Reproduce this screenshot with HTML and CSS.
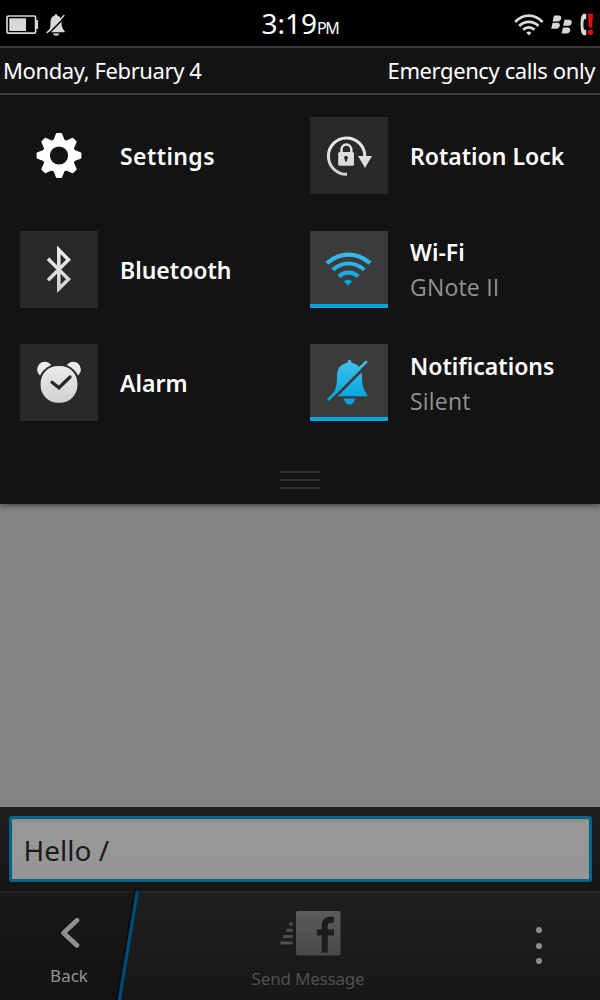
FILE: index.html
```html
<!DOCTYPE html>
<html lang="en">
<head>
  <meta charset="UTF-8">
  <title>Quick Settings</title>
  <link rel="stylesheet" href="styles.css">
</head>
<body>
  <svg class="defs" width="0" height="0">
    <defs>
      <linearGradient id="light" x1="0" y1="0" x2="0" y2="78" gradientUnits="userSpaceOnUse">
        <stop offset="0.2" stop-color="#efefef"/>
        <stop offset="0.85" stop-color="#cccccc"/>
      </linearGradient>
      <linearGradient id="blue" x1="0" y1="16" x2="0" y2="56" gradientUnits="userSpaceOnUse">
        <stop offset="0" stop-color="#44bfee"/>
        <stop offset="1" stop-color="#00a5e0"/>
      </linearGradient>
      <linearGradient id="grey" x1="0" y1="0" x2="0" y2="1">
        <stop offset="0" stop-color="#5c5c5c"/>
        <stop offset="1" stop-color="#484848"/>
      </linearGradient>
    </defs>
  </svg>

  <div class="screen">
    <div class="status-bar">
      <div class="status-left">
        <svg width="34" height="20" viewBox="0 0 34 20">
          <rect x="1" y="1" width="28.6" height="17.2" rx="1.5" fill="#000" stroke="#d8d8d8" stroke-width="1.7"/>
          <rect x="29.500" y="5" width="2.6" height="9" rx="1" fill="#d8d8d8"/>
          <rect x="3.3" y="3.3" width="16.7" height="12.7" fill="#d8d8d8"/>
        </svg>
        <svg class="status-bell" width="20" height="22" viewBox="0 0 20 22">
          <path d="M10 0.3c1 0 1.500 .6 1.500 1.500 3 .7 4 3 4 6 0 5 1 6.500 3.200 9.500v1H2c2-3 2.500-4.500 2.500-9.500 0-4 1.200-6.300 4-7C8.500.9 9 .3 10 .3z" fill="#d8d8d8"/>
          <path d="M7 19.500h6.400c-.5 3-5.900 3-6.400 0z" fill="#d8d8d8"/>
          <path d="M2 20.200L19.800 2.300" stroke="#000" stroke-width="1.500"/>
          <path d="M0.700 19L18.300 1.200" stroke="#d8d8d8" stroke-width="1.500"/>
        </svg>
      </div>
      <div class="clock">3:19<span>PM</span></div>
      <div class="status-right">
        <svg width="30" height="22" viewBox="0 0 30 22" fill="none" stroke="#dcdcdc" stroke-width="2.700">
          <path d="M1.200 8C9-.5 20.500-.5 28.500 8"/>
          <path d="M5.200 12c5.500-5.500 13.800-5.500 19.300 0"/>
          <path d="M9.200 15.800c3.200-3.200 8-3.200 11.300 0"/>
          <path d="M12.300 18.700c1.500-1.500 3.600-1.500 5.100 0l-2.500 2.800z" fill="#dcdcdc" stroke="none"/>
        </svg>
        <svg width="22" height="20" viewBox="0 0 22 20" fill="#d8d8d8">
          <path d="M3 .5h4.800c4 0 2.700 6-1 6H1.600z"/>
          <path d="M1.600 7.800h4.800c4 0 2.700 6-1 6H.2z"/>
          <path d="M13.500 4.800h4.800c4 0 2.700 6-1 6h-5.200z"/>
          <path d="M12 12.400h4.800c4 0 2.700 6-1 6h-5.200z"/>
        </svg>
        <svg width="14" height="23" viewBox="0 0 14 23">
          <path d="M6.200 .8H4.500C2 .8 .6 3 .6 11.500S2 22.200 4.500 22.200h1.700v-5.500H4c-.8-3.500-.8-7 0-10.400h2.200z" fill="#d8d8d8"/>
          <path d="M8 .8h5l-.8 13.700H8.800z" fill="#e00d0d"/>
          <circle cx="10.500" cy="19.300" r="2.700" fill="#e00d0d"/>
        </svg>
      </div>
    </div>

    <div class="panel">
      <div class="info-row">
        <span>Monday, February 4</span>
        <span>Emergency calls only</span>
      </div>

      <div class="toggles">
        <div class="toggle">
          <div class="tile plain">
            <svg width="78" height="77" viewBox="0 0 78 77">
              <g fill="#fff" transform="translate(39 38.500)">
                <g id="teeth">
                  <path id="tooth" d="M-6.500-13L-3.200-21.500q.3-.9 1.200-.9h4q.9 0 1.200.9L6.500-13z"/>
                  <use href="#tooth" transform="rotate(45)"/>
                  <use href="#tooth" transform="rotate(90)"/>
                  <use href="#tooth" transform="rotate(135)"/>
                </g>
                <use href="#teeth" transform="rotate(180)"/>
                <circle r="12.800" fill="none" stroke="#fff" stroke-width="7.400"/>
              </g>
            </svg>
          </div>
          <div class="label"><b class="wide">Settings</b></div>
        </div>

        <div class="toggle">
          <div class="tile">
            <svg width="78" height="77" viewBox="0 0 78 77">
              <path d="M37 57.300A18.200 18.200 0 1 1 54.800 39" fill="none" stroke="url(#light)" stroke-width="3"/>
              <path d="M48 39h14l-7 12z" fill="url(#light)"/>
              <path d="M31.500 36v-3.500a4.900 4.900 0 0 1 9.800 0V36" fill="none" stroke="url(#light)" stroke-width="2.500"/>
              <rect x="28.200" y="35" width="15.800" height="13.800" rx="1.500" fill="url(#light)"/>
              <path d="M36 38.800a2 2 0 0 1 1 3.700v1.900h-2v-1.900a2 2 0 0 1 1-3.700z" fill="#292929"/>
            </svg>
          </div>
          <div class="label"><b>Rotation Lock</b></div>
        </div>

        <div class="toggle">
          <div class="tile">
            <svg width="78" height="77" viewBox="0 0 78 77">
              <path d="M28 27.800L48.500 48.200 38.800 57.800V18.800L48.500 28.800 28 49.300" fill="none" stroke="url(#light)" stroke-width="3.500"/>
            </svg>
          </div>
          <div class="label"><b>Bluetooth</b></div>
        </div>

        <div class="toggle">
          <div class="tile on">
            <svg width="78" height="77" viewBox="0 0 78 77" fill="none" stroke="url(#blue)" stroke-width="4.200">
              <path d="M16.800 32.300C30 20.600 47 20.600 60.200 32.300"/>
              <path d="M22.800 38.800c9.500-8.400 22-8.400 31.500 0"/>
              <path d="M28.800 45.300c6-5 13.500-5 19.500 0"/>
              <path d="M34 50.400c2.500-2.300 5.500-2.300 8 0l-4 4z" fill="url(#blue)" stroke="none"/>
            </svg>
          </div>
          <div class="label"><b>Wi-Fi</b><small>GNote II</small></div>
        </div>

        <div class="toggle">
          <div class="tile">
            <svg width="78" height="77" viewBox="0 0 78 77">
              <circle cx="24.800" cy="25.500" r="7.700" fill="url(#light)"/>
              <circle cx="53.200" cy="25.500" r="7.700" fill="url(#light)"/>
              <ellipse cx="39" cy="40.200" rx="21" ry="20.500" fill="#292929"/>
              <rect x="20.600" y="22" width="36.800" height="36.800" rx="17.400" fill="url(#light)"/>
              <path d="M32 38.200l7 5.500L50 33" fill="none" stroke="#292929" stroke-width="3.300" stroke-linecap="round"/>
            </svg>
          </div>
          <div class="label"><b>Alarm</b></div>
        </div>

        <div class="toggle">
          <div class="tile on">
            <svg width="78" height="77" viewBox="0 0 78 77">
              <path d="M39.500 16c1.500 0 2 1 2 2.800 7.500 1.200 10.500 6.500 10.500 13.500 0 10 1.500 12 5.500 19.500v.5H22v-1c4-7 5-9 5-19 0-7.500 3-12 10.500-13.500 0-1.800.5-2.800 2-2.800z" fill="url(#blue)"/>
              <path d="M34 54.500h11c-.8 8-10.200 8-11 0z" fill="url(#blue)"/>
              <path d="M22.500 55.500L58.500 19.500" stroke="#3b3b3b" stroke-width="2.800"/>
              <path d="M18.500 55.500L56 18" stroke="url(#blue)" stroke-width="2.600" stroke-linecap="round"/>
            </svg>
          </div>
          <div class="label"><b>Notifications</b><small>Silent</small></div>
        </div>
      </div>

      <div class="grip"><i></i><i></i><i></i></div>
    </div>

    <div class="content"></div>

    <div class="compose">
      <div class="field">Hello /</div>
    </div>

    <div class="action-bar">
      <div class="back">
        <svg width="24" height="34" viewBox="0 0 24 34">
          <path d="M19.500 4.500L6 17l13.500 12.500" fill="none" stroke="#0c0c0c" stroke-width="6.500" stroke-linecap="round" stroke-linejoin="round"/>
          <path d="M20 4.300L6.500 17l13.500 12.300" fill="none" stroke="#8e8e8e" stroke-width="5" stroke-linecap="round" stroke-linejoin="round"/>
        </svg>
        <span>Back</span>
      </div>
      <svg width="24" height="109" viewBox="0 0 24 109">
        <path d="M0 0H20L2 109H0z" fill="#000" fill-opacity="0.200"/>
        <path d="M20 0L2 109" stroke="#090909" stroke-width="2"/>
        <path d="M22.300 0L4.300 109" stroke="#004b7c" stroke-width="3.300"/>
      </svg>
      <div class="send">
        <svg width="62" height="46" viewBox="0 0 62 46">
          <rect x="17" y="1" width="44.500" height="44.500" rx="2" fill="url(#grey)"/>
          <path d="M54.800 9.800h-3.500q-5.500 0-5.500 5.500V42.500M38 22.500h17" fill="none" stroke="#1c1c1c" stroke-width="6"/>
          <g stroke="#505050" stroke-width="3" stroke-linecap="round">
            <path d="M11.500 14h1"/>
            <path d="M8.500 20.300h4"/>
            <path d="M5.500 26.600h7"/>
            <path d="M2.500 33h10"/>
          </g>
        </svg>
        <span>Send Message</span>
      </div>
      <div class="more"><i></i><i></i><i></i></div>
    </div>
  </div>
</body>
</html>
```

FILE: styles.css
```css
body {
  margin: 0;
  background: #000;
  font-family: "Noto Sans", sans-serif;
  color: #fff;
}
.defs {
  position: absolute;
}
svg {
  display: block;
}
.screen {
  display: flex;
  flex-direction: column;
  width: 600px;
  height: 1000px;
  overflow: hidden;
}
.status-bar {
  display: grid;
  grid-template-columns: 1fr auto 1fr;
  align-items: center;
  height: 46px;
  padding: 0 6px;
  background: #000;
}
.status-left,
.status-right {
  display: flex;
  align-items: center;
  padding-bottom: 2px;
}
.status-right {
  justify-content: flex-end;
  gap: 7px;
}
.status-bell {
  margin-left: 6px;
}
.clock {
  font-size: 28px;
  line-height: 46px;
}
.clock span {
  font-size: 16px;
  letter-spacing: -1.4px;
}
.panel {
  display: flex;
  flex-direction: column;
  height: 458px;
  background: #131313;
  box-shadow: 0 1px 6px rgba(0, 0, 0, 0.6);
  z-index: 1;
}
.info-row {
  display: flex;
  justify-content: space-between;
  height: 45px;
  padding: 0 5px 0 3px;
  border-top: 2px solid #3a3a3a;
  border-bottom: 2px solid #3d3d3d;
  font-size: 22px;
  line-height: 44px;
  letter-spacing: -0.4px;
}
.toggles {
  display: grid;
  grid-template-columns: 290px 290px;
  grid-auto-rows: 77px;
  row-gap: 36.5px;
  padding: 22px 0 0 20px;
}
.toggle {
  display: flex;
  gap: 22px;
}
.tile {
  width: 78px;
  height: 77px;
  background: #292929;
}
.tile.plain {
  background: none;
}
.tile.on {
  background: #3b3b3b;
  box-shadow: inset 0 -4px #00a5e0;
}
.label {
  display: flex;
  flex-direction: column;
  justify-content: center;
  padding-top: 2px;
  white-space: nowrap;
}
.label b {
  font-size: 23px;
  font-weight: 600;
  line-height: 35px;
}
.label .wide {
  letter-spacing: 0.4px;
}
.label small {
  font-family: "Open Sans", sans-serif;
  font-size: 23px;
  line-height: 35px;
  letter-spacing: 0.2px;
  color: #929292;
}
.grip {
  display: flex;
  flex-direction: column;
  align-items: center;
  gap: 6px;
  margin-top: 50px;
}
.grip i {
  width: 40px;
  height: 2px;
  background: #303030;
}
.content {
  height: 303px;
  background: #848484;
}
.compose {
  box-sizing: border-box;
  height: 84px;
  padding: 9px 8.5px;
  background: linear-gradient(#202020, #151515);
}
.field {
  box-sizing: border-box;
  height: 66px;
  padding-left: 12px;
  border: 3px solid #00658a;
  border-radius: 3px;
  background: linear-gradient(#999, #959595);
  box-shadow: inset 0 2px 2px rgba(0, 0, 0, 0.1);
  font-size: 28px;
  line-height: 63px;
  color: #1a1a1a;
}
.action-bar {
  display: flex;
  height: 109px;
  background: linear-gradient(#2a2a2a 0, #2a2a2a 1px, #202020 2px, #171717);
}
.back {
  display: flex;
  flex-direction: column;
  align-items: center;
  box-sizing: border-box;
  width: 115px;
  padding: 25px 0 0 23px;
  background: rgba(0, 0, 0, 0.2);
  font-size: 17px;
  color: #969696;
}
.back span {
  margin-top: 14px;
}
.send {
  display: flex;
  flex-direction: column;
  align-items: center;
  width: 338px;
  padding-top: 19px;
  font-size: 17px;
  letter-spacing: -0.2px;
  color: #505050;
}
.send svg {
  margin-left: 3px;
}
.send span {
  margin-top: 11px;
}
.more {
  display: flex;
  flex-direction: column;
  align-items: center;
  gap: 9.6px;
  width: 123px;
  padding-top: 36px;
}
.more i {
  width: 6px;
  height: 6px;
  border-radius: 50%;
  background: #8e8e8e;
}
```
